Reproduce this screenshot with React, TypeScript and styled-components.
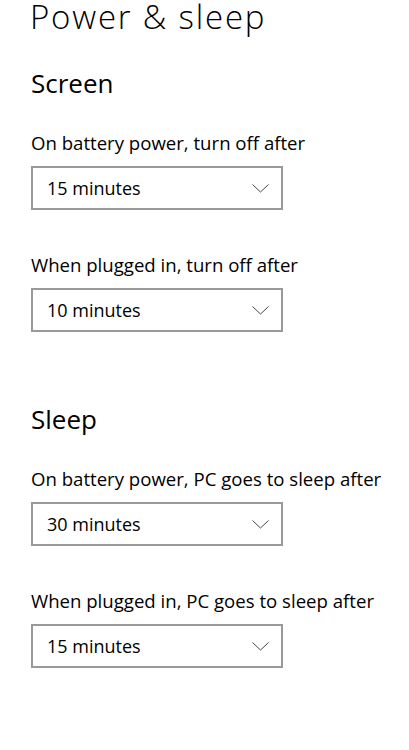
import * as React from 'react'
import styled, { createGlobalStyle } from 'styled-components'

const GlobalStyle = createGlobalStyle`
  html, body {
    margin: 0;
    padding: 0;
    background: #ffffff;
  }
  body {
    font-family: 'Open Sans', 'Noto Sans', sans-serif;
    color: #000000;
  }
`

const Page = styled.div`
  display: flex;
  flex-direction: column;
  padding: 0 0 0 30px;
  min-height: 750px;
  box-sizing: border-box;
`

const Title = styled.h1`
  margin: 0;
  font-size: 33px;
  font-weight: 300;
  line-height: 34px;
  letter-spacing: 1.8px;
`

const Section = styled.section`
  display: flex;
  flex-direction: column;
  margin-top: ${(p: { $gap: number }) => p.$gap}px;
`

const SectionTitle = styled.h2`
  margin: 0 0 31px 1px;
  font-size: 26px;
  font-weight: 400;
  line-height: 32px;
`

const Fields = styled.div`
  display: flex;
  flex-direction: column;
  gap: 42px;
`

const Field = styled.div`
  display: flex;
  flex-direction: column;
  gap: 10px;
  margin-left: 1px;
`

const Label = styled.div`
  font-size: 18.6px;
  line-height: 26px;
  white-space: nowrap;
`

const Select = styled.div`
  display: flex;
  align-items: center;
  justify-content: space-between;
  box-sizing: border-box;
  width: 252px;
  height: 44px;
  padding: 0 12px 0 14px;
  border: 2px solid #999999;
  background: #ffffff;
  font-size: 18px;
`

const Chevron = () => (
  <svg width="17" height="9" viewBox="0 0 17 9">
    <polyline points="0.5,0.5 8.5,8 16.5,0.5" fill="none" stroke="#444" strokeWidth="1" />
  </svg>
)

interface Setting {
  label: string
  value: string
}

const sections: { title: string; gap: number; settings: Setting[] }[] = [
  {
    title: 'Screen',
    gap: 33,
    settings: [
      { label: 'On battery power, turn off after', value: '15 minutes' },
      { label: 'When plugged in, turn off after', value: '10 minutes' },
    ],
  },
  {
    title: 'Sleep',
    gap: 71,
    settings: [
      { label: 'On battery power, PC goes to sleep after', value: '30 minutes' },
      { label: 'When plugged in, PC goes to sleep after', value: '15 minutes' },
    ],
  },
]

export default function App(): JSX.Element {
  return (
    <Page>
      <GlobalStyle />
      <Title>Power &amp; sleep</Title>
      {sections.map((s) => (
        <Section key={s.title} $gap={s.gap}>
          <SectionTitle>{s.title}</SectionTitle>
          <Fields>
            {s.settings.map((f) => (
              <Field key={f.label}>
                <Label>{f.label}</Label>
                <Select>
                  <span>{f.value}</span>
                  <Chevron />
                </Select>
              </Field>
            ))}
          </Fields>
        </Section>
      ))}
    </Page>
  )
}
